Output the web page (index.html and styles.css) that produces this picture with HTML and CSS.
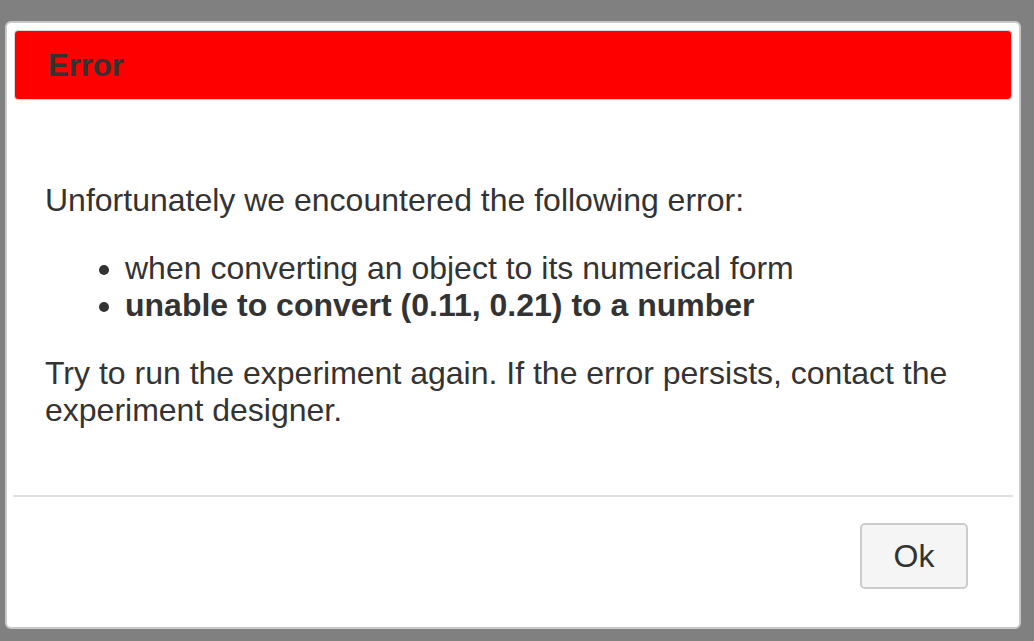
FILE: index.html
```html
<!DOCTYPE html>
<html lang="en">
<head>
  <meta charset="UTF-8">
  <title>Error</title>
  <link rel="stylesheet" href="styles.css">
</head>
<body>
  <div class="dialog">
    <div class="dialog-header">
      <div class="dialog-title">Error</div>
    </div>

    <div class="dialog-body">
      <p>Unfortunately we encountered the following error:</p>
      <ul>
        <li>when converting an object to its numerical form</li>
        <li><strong>unable to convert (0.11, 0.21) to a number</strong></li>
      </ul>
      <p>Try to run the experiment again. If the error persists, contact the experiment designer.</p>
    </div>

    <div class="dialog-footer">
      <button class="btn">Ok</button>
    </div>
  </div>
</body>
</html>
```

FILE: styles.css
```css
body {
  margin: 0;
  background-color: #808080;
  font-family: "Liberation Sans", Arial, sans-serif;
  color: #333333;
}

.dialog {
  box-sizing: border-box;
  width: 1016px;
  height: 608px;
  margin: 21px 0 0 5px;
  padding: 7px;
  background-color: #ffffff;
  border: 2px solid #c8c8c8;
  border-radius: 6px;
}

.dialog-header {
  box-sizing: border-box;
  height: 70px;
  display: flex;
  align-items: center;
  padding: 2px 0 0 33px;
  background-color: #ff0000;
  border: 1px solid #d8d8d8;
  border-radius: 4px;
}

.dialog-title {
  font-size: 31px;
  font-weight: bold;
  color: #333333;
}

.dialog-body {
  padding: 51px 32px 35px;
  font-size: 32px;
  line-height: 37px;
  border-bottom: 2px solid #e0e0e0;
  margin: 0 -1px;
}

.dialog-body p {
  margin: 31px 0;
}

.dialog-body ul {
  margin: 31px 0;
  padding-left: 80px;
}

.dialog-footer {
  display: flex;
  justify-content: flex-end;
  padding: 26px 44px 0 0;
}

.btn {
  width: 108px;
  height: 66px;
  font-family: inherit;
  font-size: 32px;
  color: #333333;
  background-color: #f5f5f5;
  border: 2px solid #cccccc;
  border-radius: 5px;
}
```
